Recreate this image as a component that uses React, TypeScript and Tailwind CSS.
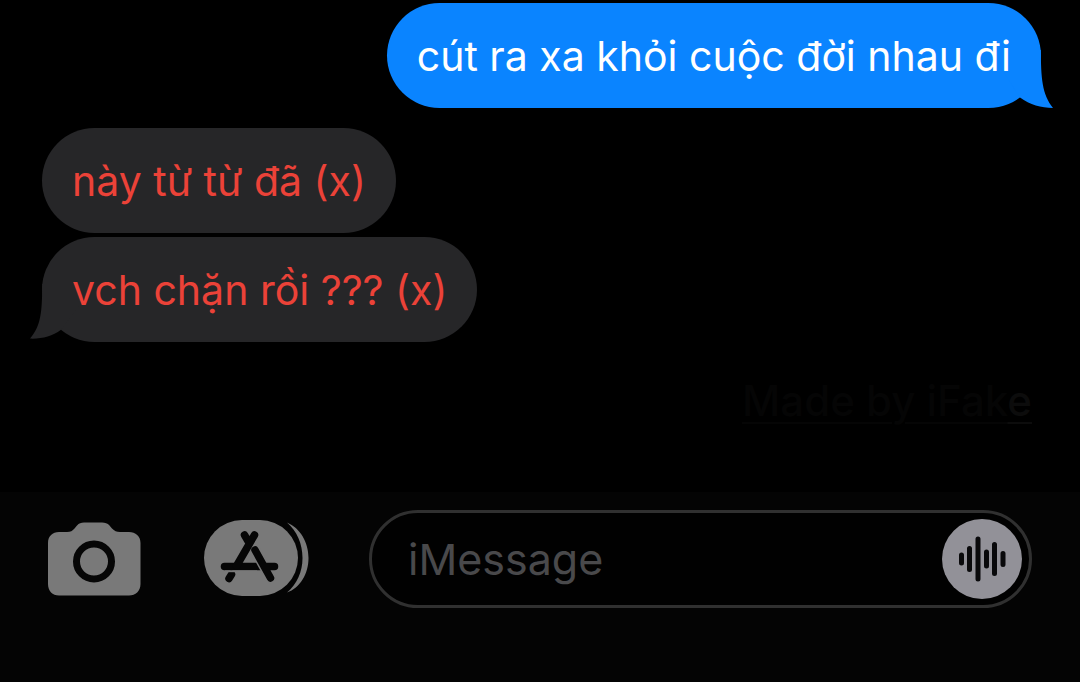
import React from "react";

type MessageProps = {
  side: "sent" | "received";
  text: string;
  tail?: boolean;
};

function SentTail() {
  return (
    <svg
      className="absolute -right-3 bottom-0 h-[60px] w-[56px] text-[#0a84ff]"
      viewBox="0 0 56 60"
      fill="currentColor"
      aria-hidden="true"
    >
      <path d="M43.8 2C44 30 45 46 56 60C44 60 33 57 23 49.6L4 20V2Z" />
    </svg>
  );
}

function ReceivedTail() {
  return (
    <svg
      className="absolute -left-3 bottom-0 h-[60px] w-[56px] text-[#262628]"
      viewBox="0 0 56 60"
      fill="currentColor"
      aria-hidden="true"
    >
      <path d="M12.2 2C12.2 30 11 44 0 56.6C12 57 22 54.5 31 47.8L52 20V2Z" />
    </svg>
  );
}

function Message({ side, text, tail = false }: MessageProps) {
  const sent = side === "sent";
  return (
    <li className={sent ? "flex justify-end" : "flex justify-start"}>
      <p
        className={
          sent
            ? "relative flex h-[105px] items-center rounded-full bg-[#0a84ff] px-[30px] text-white"
            : "relative flex h-[105px] items-center rounded-full bg-[#262628] px-[30px] text-[#eb4238]"
        }
      >
        {tail && (sent ? <SentTail /> : <ReceivedTail />)}
        <span className="relative">{text}</span>
      </p>
    </li>
  );
}

function CameraIcon() {
  return (
    <svg className="h-[74px] w-[94px]" viewBox="0 0 94 74" aria-hidden="true">
      <path
        fill="#797979"
        d="M12 10H20C23.500 10 25.500 9 27.500 6.500L30 3.500C32 1.300 34 .5 37 .5H55C58 .5 60.500 1.300 62.500 3.500L65 6.500C67.500 9 69.500 10 73 10H82C88.500 10 93.500 14 93.500 21V62C93.500 69 88.500 73.500 82 73.500H12C5.500 73.500 1 69 1 62V21C1 14 5.500 10 12 10Z"
      />
      <circle cx="47" cy="39.500" r="17.500" fill="none" stroke="#060606" strokeWidth="7" />
    </svg>
  );
}

function AppsIcon() {
  return (
    <svg className="h-[78px] w-[106px]" viewBox="0 0 106 78" aria-hidden="true">
      <rect x="1" y="1" width="94" height="76" rx="38" fill="#797979" />
      <path
        fill="#797979"
        d="M84 3.500C97 9 105.500 23 105.500 39C105.500 55 97 69 84 73.500C94 65 99.500 53 99.500 39C99.500 25 94 12 84 3.500Z"
      />
      <g stroke="#060606" strokeLinecap="round" strokeWidth="7.500" fill="none">
        <path d="M21.500 47.500H60" />
        <path d="M52 31L67.500 59" stroke="#797979" strokeWidth="10.500" />
        <path d="M52 31L67.500 59M64 47.500H71.500" />
        <path d="M51.500 16L33.500 47M41.500 16L45 22M28.500 55.500L26 59.500" />
      </g>
      <path d="M22 52.300H54" stroke="#797979" strokeWidth="1.800" />
    </svg>
  );
}

function WaveIcon() {
  return (
    <svg className="h-[46px] w-[48px]" viewBox="0 0 48 46" aria-hidden="true">
      <path
        d="M3.500 19V27M11.500 12.500V33.500M20 3V43M28.500 16V30M36.500 8.500V37.500M45 17.500V28.500"
        stroke="#09090b"
        strokeWidth="5"
        strokeLinecap="round"
        fill="none"
      />
    </svg>
  );
}

export default function App() {
  return (
    <main className="flex min-h-screen flex-col bg-black font-['Inter','Noto_Sans',sans-serif]">
      <section className="flex grow flex-col pt-[3px]">
        <ol className="flex flex-col pr-[39px] pl-[42px] text-[41px] leading-[48px]">
          <Message side="sent" text="cút ra xa khỏi cuộc đời nhau đi" tail />
          <li className="mt-5">
            <ol className="flex flex-col gap-1">
              <Message side="received" text="này từ từ đã (x)" />
              <Message side="received" text="vch chặn rồi ??? (x)" tail />
            </ol>
          </li>
        </ol>
        <p className="mt-[34px] mr-12 self-end text-[42px] leading-[50px] font-medium text-[#050505] underline decoration-2 underline-offset-[6px]">
          Made by iFak<span className="text-[#0c0c0c] underline decoration-2 underline-offset-[6px]">e</span>
        </p>
      </section>

      <form
        className="flex h-[190px] items-start bg-[#040404] pt-[18px] pr-12 pl-[47px]"
        onSubmit={(event) => event.preventDefault()}
      >
        <div className="flex h-[98px] items-center gap-[62px]">
          <button type="button" aria-label="Camera">
            <CameraIcon />
          </button>
          <button type="button" aria-label="Apps" className="-mt-0.5">
            <AppsIcon />
          </button>
        </div>
        <div className="ml-[60px] flex h-[98px] min-w-0 grow items-center rounded-full border-3 border-[#303030] bg-[#010101] pr-[7px] pl-9">
          <input
            type="text"
            aria-label="iMessage"
            placeholder="iMessage"
            className="min-w-0 grow bg-transparent text-[43px] leading-[52px] text-white outline-none placeholder:text-[#49494b]"
          />
          <button
            type="button"
            aria-label="Record audio"
            className="flex size-20 shrink-0 items-center justify-center rounded-full bg-[#929198]"
          >
            <WaveIcon />
          </button>
        </div>
      </form>
    </main>
  );
}
